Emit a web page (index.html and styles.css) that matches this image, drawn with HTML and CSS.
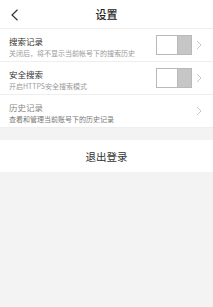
FILE: index.html
```html
<!DOCTYPE html>
<html lang="zh">
<head>
<meta charset="utf-8">
<link rel="stylesheet" href="styles.css">
</head>
<body>
<div class="page">
  <header class="header">
    <svg class="back" width="9" height="12" viewBox="0 0 9 12"><path d="M7.5 0.8 L2 6 L7.5 11.2" fill="none" stroke="#333" stroke-width="1.2"/></svg>
    <div class="title">设置</div>
  </header>
  <div class="list">
    <div class="row">
      <div class="text">
        <div class="t">搜索记录</div>
        <div class="s">关闭后，将不显示当前帐号下的搜索历史</div>
      </div>
      <div class="toggle"><div class="knob"></div></div>
      <svg class="chev" width="6" height="10" viewBox="0 0 6 10"><path d="M1 1 L5 5 L1 9" fill="none" stroke="#c8c8c8" stroke-width="1"/></svg>
    </div>
    <div class="row">
      <div class="text">
        <div class="t">安全搜索</div>
        <div class="s">开启HTTPS安全搜索模式</div>
      </div>
      <div class="toggle"><div class="knob"></div></div>
      <svg class="chev" width="6" height="10" viewBox="0 0 6 10"><path d="M1 1 L5 5 L1 9" fill="none" stroke="#c8c8c8" stroke-width="1"/></svg>
    </div>
    <div class="row row-muted">
      <div class="text">
        <div class="t">历史记录</div>
        <div class="s">查看和管理当前账号下的历史记录</div>
      </div>
      <svg class="chev" width="6" height="10" viewBox="0 0 6 10"><path d="M1 1 L5 5 L1 9" fill="none" stroke="#c8c8c8" stroke-width="1"/></svg>
    </div>
  </div>
  <div class="logout">退出登录</div>
</div>
</body>
</html>
```
FILE: styles.css
```css
html, body {
  margin: 0;
  padding: 0;
  background: #f3f3f3;
  font-family: "Noto Sans CJK SC", "Noto Sans", sans-serif;
}
.page {
  width: 213px;
  min-height: 307px;
  background: #f3f3f3;
}
.header {
  height: 28px;
  background: #fff;
  border-bottom: 1px solid #eeeeee;
  display: flex;
  align-items: center;
  justify-content: center;
  position: relative;
}
.back {
  position: absolute;
  left: 10px;
  top: 9px;
}
.title {
  font-size: 11px;
  font-weight: 500;
  color: #222;
  line-height: 14px;
}
.list {
  background: #fff;
}
.row {
  height: 32px;
  border-bottom: 1px solid #eeeeee;
  display: flex;
  align-items: center;
  padding: 0 11px 0 9px;
}
.text {
  flex: 1;
  align-self: flex-start;
  display: flex;
  flex-direction: column;
  gap: 1px;
  padding-top: 6px;
}
.t {
  font-size: 8.5px;
  line-height: 12px;
  color: #333;
}
.s {
  font-size: 7px;
  line-height: 10px;
  color: #9a9a9a;
}
.row-muted .t {
  color: #888;
}
.row-muted .s {
  color: #777;
}
.toggle {
  width: 36px;
  height: 20px;
  box-sizing: border-box;
  border: 1px solid #b9b9b9;
  background: #c6c6c6;
  display: flex;
  margin-right: 4px;
}
.knob {
  width: 21px;
  height: 100%;
  box-sizing: border-box;
  background: #fff;
  border-right: 1px solid #b9b9b9;
}
.chev {
  display: block;
}
.logout {
  margin-top: 12px;
  height: 32px;
  background: #fff;
  display: flex;
  align-items: center;
  justify-content: center;
  font-size: 10.5px;
  color: #333;
}
```
